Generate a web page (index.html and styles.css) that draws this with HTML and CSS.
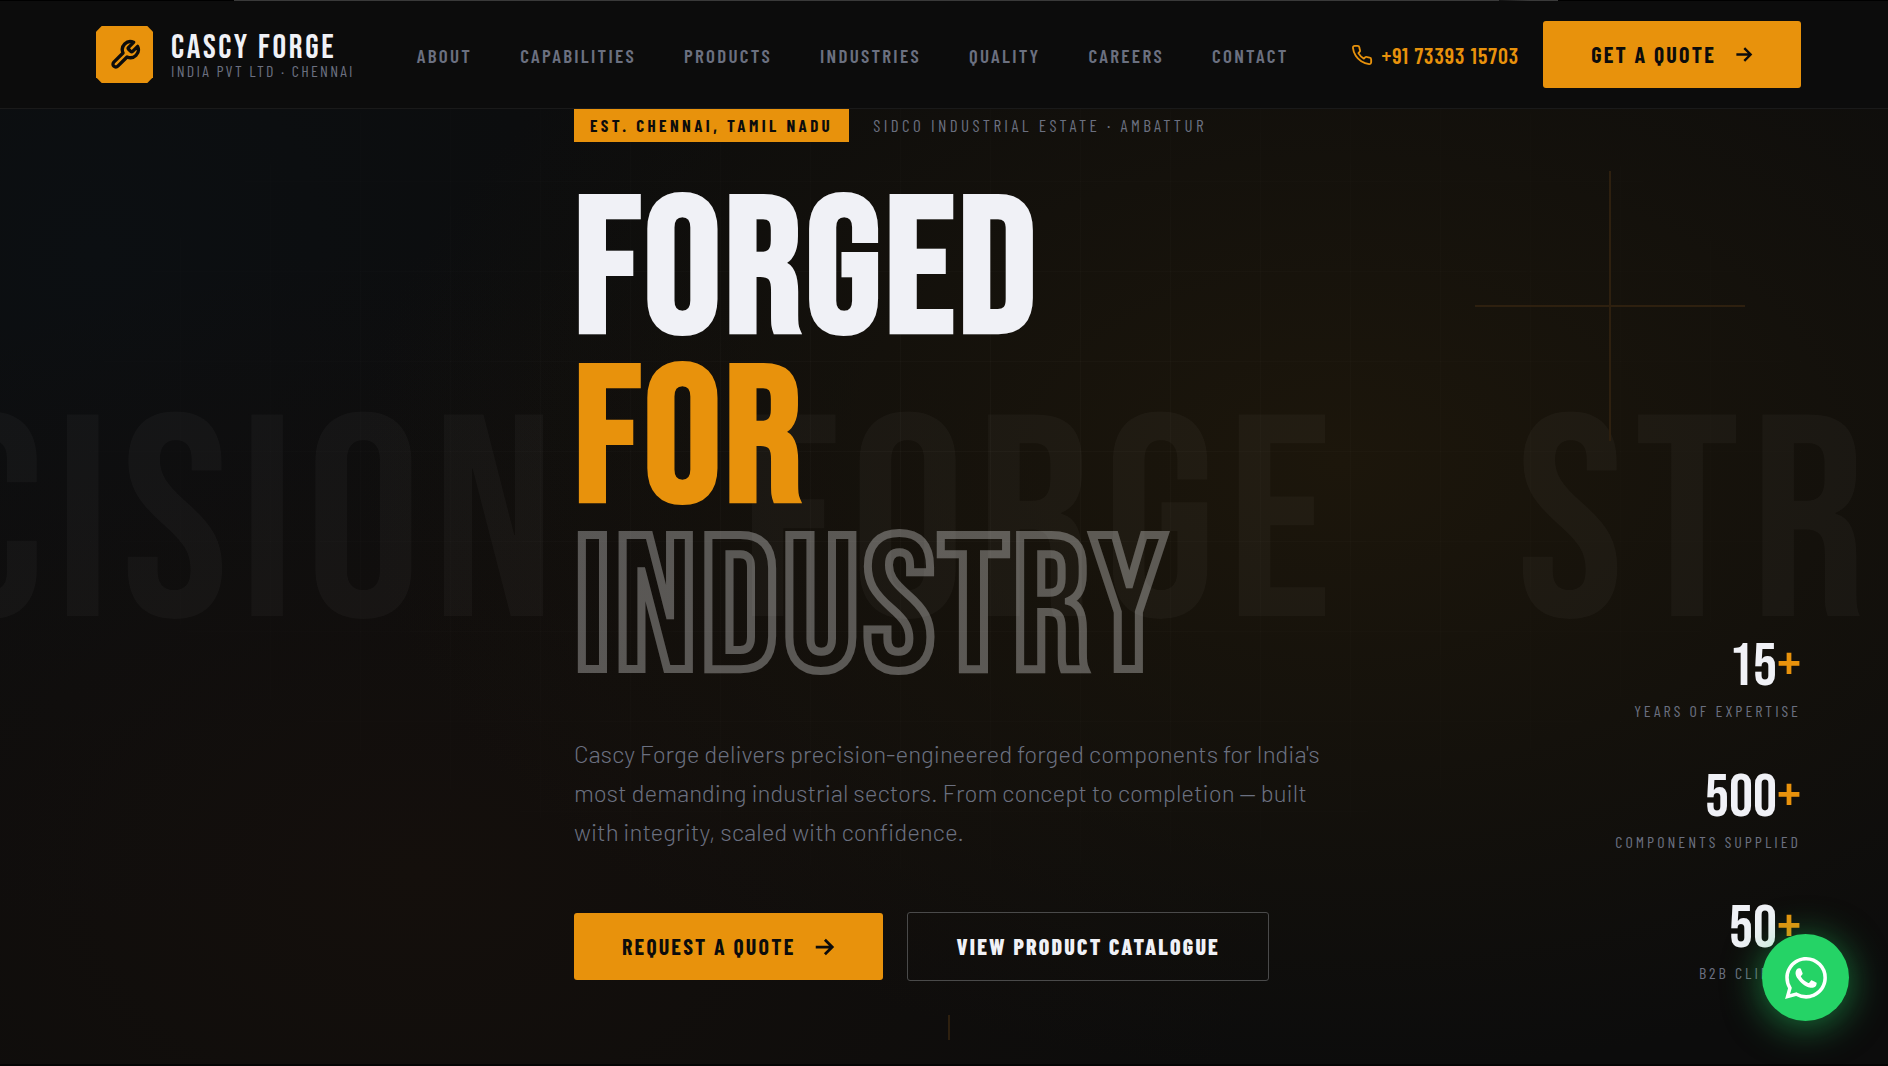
FILE: index.html
```html
<!DOCTYPE html>
<html lang="en">
<head>
<meta charset="UTF-8">
<meta name="viewport" content="width=device-width, initial-scale=1">
<title>Cascy Forge India Pvt Ltd</title>
<link rel="stylesheet" href="styles.css">
</head>
<body>
<div class="top-strip"></div>

<header class="header">
  <a class="logo" href="#">
    <span class="logo-icon">
      <svg viewBox="0 0 24 24" fill="none" stroke="currentColor" stroke-width="2.5" stroke-linecap="round" stroke-linejoin="round"><path d="M14.7 6.3a1 1 0 0 0 0 1.4l1.6 1.6a1 1 0 0 0 1.4 0l3.77-3.77a6 6 0 0 1-7.94 7.94l-6.91 6.91a2.12 2.12 0 0 1-3-3l6.91-6.91a6 6 0 0 1 7.94-7.94l-3.76 3.76z"/></svg>
    </span>
    <span class="logo-text">
      <span class="logo-name">CASCY FORGE</span>
      <span class="logo-sub">INDIA PVT LTD · CHENNAI</span>
    </span>
  </a>
  <nav class="nav">
    <a href="#about">ABOUT</a>
    <a href="#capabilities">CAPABILITIES</a>
    <a href="#products">PRODUCTS</a>
    <a href="#industries">INDUSTRIES</a>
    <a href="#quality">QUALITY</a>
    <a href="#careers">CAREERS</a>
    <a href="#contact">CONTACT</a>
  </nav>
  <div class="header-right">
    <a class="phone" href="tel:+917339315703">
      <svg viewBox="0 0 24 24" fill="none" stroke="currentColor" stroke-width="2" stroke-linecap="round" stroke-linejoin="round"><path d="M22 16.92v3a2 2 0 0 1-2.18 2 19.79 19.79 0 0 1-8.63-3.07 19.5 19.5 0 0 1-6-6 19.79 19.79 0 0 1-3.07-8.67A2 2 0 0 1 4.11 2h3a2 2 0 0 1 2 1.72c.127.96.361 1.903.7 2.81a2 2 0 0 1-.45 2.11L8.09 9.91a16 16 0 0 0 6 6l1.27-1.27a2 2 0 0 1 2.11-.45c.907.339 1.85.573 2.81.7A2 2 0 0 1 22 16.92z"/></svg>
      +91 73393 15703
    </a>
    <a class="btn btn-primary" href="#quote">GET A QUOTE
      <svg viewBox="0 0 24 24" fill="none" stroke="currentColor" stroke-width="3"><path d="M3 12h17M13 4l8 8-8 8"/></svg>
    </a>
  </div>
</header>

<main class="hero">
  <div class="hero-grid"></div>
  <div class="hero-marquee" aria-hidden="true">
    <span>PRECISION</span><span>FORGE</span><span>STRENGTH</span>
  </div>
  <div class="hero-cross"></div>

  <section class="hero-content">
    <div class="eyebrow">
      <span class="badge">EST. CHENNAI, TAMIL NADU</span>
      <span class="place">SIDCO INDUSTRIAL ESTATE · AMBATTUR</span>
    </div>
    <h1 class="title">
      <span>FORGED</span>
      <span class="title-accent">FOR</span>
      <span class="title-outline">INDUSTRY</span>
    </h1>
    <p class="lead">Cascy Forge delivers precision-engineered forged components for India's most demanding industrial sectors. From concept to completion — built with integrity, scaled with confidence.</p>
    <div class="actions">
      <a class="btn btn-primary" href="#quote">REQUEST A QUOTE
        <svg viewBox="0 0 24 24" fill="none" stroke="currentColor" stroke-width="3"><path d="M3 12h17M13 4l8 8-8 8"/></svg>
      </a>
      <a class="btn btn-outline" href="#catalogue">VIEW PRODUCT CATALOGUE</a>
    </div>
  </section>

  <aside class="stats">
    <div class="stat">
      <div class="stat-num">15<span>+</span></div>
      <div class="stat-label">YEARS OF EXPERTISE</div>
    </div>
    <div class="stat">
      <div class="stat-num">500<span>+</span></div>
      <div class="stat-label">COMPONENTS SUPPLIED</div>
    </div>
    <div class="stat">
      <div class="stat-num">50<span>+</span></div>
      <div class="stat-label">B2B CLIENTS</div>
    </div>
  </aside>
  <div class="scroll-line"></div>
</main>

<a class="whatsapp" href="#whatsapp" aria-label="WhatsApp">
  <svg viewBox="0 0 24 24" fill="currentColor"><path d="M17.472 14.382c-.297-.149-1.758-.867-2.03-.967-.273-.099-.471-.148-.67.15-.197.297-.767.966-.94 1.164-.173.199-.347.223-.644.075-.297-.15-1.255-.463-2.39-1.475-.883-.788-1.48-1.761-1.653-2.059-.173-.297-.018-.458.13-.606.134-.133.298-.347.446-.52.149-.174.198-.298.298-.497.099-.198.05-.371-.025-.52-.075-.149-.669-1.612-.916-2.207-.242-.579-.487-.5-.669-.51-.173-.008-.371-.01-.57-.01-.198 0-.52.074-.792.372-.272.297-1.04 1.016-1.04 2.479 0 1.462 1.065 2.875 1.213 3.074.149.198 2.096 3.2 5.077 4.487.709.306 1.262.489 1.694.625.712.227 1.36.195 1.871.118.571-.085 1.758-.719 2.006-1.413.248-.694.248-1.289.173-1.413-.074-.124-.272-.198-.57-.347m-5.421 7.403h-.004a9.87 9.87 0 0 1-5.031-1.378l-.361-.214-3.741.982.998-3.648-.235-.374a9.86 9.86 0 0 1-1.51-5.26c.001-5.45 4.436-9.884 9.888-9.884 2.64 0 5.122 1.03 6.988 2.898a9.825 9.825 0 0 1 2.893 6.994c-.003 5.45-4.437 9.884-9.885 9.884m8.413-18.297A11.815 11.815 0 0 0 12.05 0C5.495 0 .16 5.335.157 11.892c0 2.096.547 4.142 1.588 5.945L.057 24l6.305-1.654a11.882 11.882 0 0 0 5.683 1.448h.005c6.554 0 11.89-5.335 11.893-11.893a11.821 11.821 0 0 0-3.48-8.413z"/></svg>
</a>
</body>
</html>
```
FILE: styles.css
```css
* {
  box-sizing: border-box;
  margin: 0;
  padding: 0;
}
:root {
  --amber: #e8920c;
  --ink: #0c0c0c;
  --light: #f0f1f6;
  --muted: #6b7080;
}
body {
  background: #050505;
  color: var(--light);
  font-family: Barlow, Roboto, sans-serif;
  overflow: hidden;
}
a {
  color: inherit;
  text-decoration: none;
}
svg {
  flex: none;
}
.top-strip {
  height: 1px;
  background: linear-gradient(90deg, #000 12.4%, #3a3a3a 12.4%, #3a3a3a 79.4%, #111 79.4%, #3a3a3a 81%, #3a3a3a 82.5%, #000 82.5%);
}

/* header */
.header {
  display: flex;
  align-items: center;
  justify-content: space-between;
  height: 108px;
  padding: 0 87px 0 96px;
  background: var(--ink);
  border-bottom: 1px solid #1a1a1a;
}
.logo {
  display: flex;
  align-items: center;
  gap: 18px;
}
.logo-icon {
  display: flex;
  align-items: center;
  justify-content: center;
  width: 57px;
  height: 57px;
  background: var(--amber);
  color: var(--ink);
  clip-path: polygon(10% 0, 90% 0, 100% 10%, 100% 90%, 90% 100%, 10% 100%, 0 90%, 0 10%);
}
.logo-icon svg {
  width: 32px;
  height: 32px;
}
.logo-text {
  display: flex;
  flex-direction: column;
}
.logo-name {
  font-family: "Bebas Neue", "Barlow Condensed", sans-serif;
  font-size: 34px;
  line-height: 32px;
  letter-spacing: 0.08em;
}
.logo-sub {
  font-family: "Barlow Condensed", "Roboto Condensed", sans-serif;
  font-size: 16px;
  line-height: 14px;
  letter-spacing: 0.14em;
  color: var(--muted);
}
.nav {
  display: flex;
  gap: 48px;
  padding-top: 2px;
  font-family: "Barlow Condensed", "Roboto Condensed", sans-serif;
  font-size: 19px;
  font-weight: 600;
  letter-spacing: 0.12em;
  color: var(--muted);
}
.header-right {
  display: flex;
  align-items: center;
  gap: 24px;
}
.phone {
  display: flex;
  align-items: center;
  gap: 9px;
  font-family: "Barlow Condensed", "Roboto Condensed", sans-serif;
  font-size: 22px;
  font-weight: 600;
  letter-spacing: 1px;
  color: var(--amber);
}
.phone svg {
  width: 22px;
  height: 22px;
}
.btn {
  display: inline-flex;
  align-items: center;
  gap: 18px;
  padding: 20px 48px;
  border-radius: 3px;
  font-family: "Barlow Condensed", "Roboto Condensed", sans-serif;
  font-size: 22px;
  line-height: 27px;
  font-weight: 700;
  letter-spacing: 0.1em;
}
.btn svg {
  width: 19px;
  height: 19px;
}
.btn-primary {
  background: var(--amber);
  color: var(--ink);
}
.btn-outline {
  border: 1px solid #4a4a4a;
  font-weight: 800;
}

/* hero */
.hero {
  position: relative;
  display: grid;
  grid-template-columns: 478px minmax(0, 1fr) auto;
  min-height: calc(100vh - 111px);
  padding: 0 87px 81px 96px;
  overflow: hidden;
  background:
    radial-gradient(ellipse 52% 64% at 71% 37%, #1c160b, transparent),
    radial-gradient(ellipse 45% 65% at 22% 80%, #140f0c, transparent),
    radial-gradient(ellipse 35% 70% at 5% 15%, #0c0f12, transparent),
    var(--ink);
}
.hero-grid {
  position: absolute;
  inset: -18px 0 0;
  background:
    linear-gradient(rgba(255, 255, 255, 0.025) 1px, transparent 1px),
    linear-gradient(90deg, rgba(255, 255, 255, 0.025) 1px, transparent 1px);
  background-size: 90px 90px;
  mask-image: radial-gradient(ellipse 60% 60% at 50% 35%, #000, transparent);
}
.hero-marquee {
  position: absolute;
  top: 248px;
  left: -431px;
  display: flex;
  gap: 174px;
  font-family: "Bebas Neue", "Barlow Condensed", sans-serif;
  font-size: 288px;
  line-height: 346px;
  letter-spacing: 11px;
  white-space: nowrap;
  color: rgba(255, 255, 255, 0.03);
}
.hero-cross {
  position: absolute;
  top: 62px;
  right: 143px;
  width: 270px;
  height: 270px;
  background:
    linear-gradient(#2e200f, #2e200f) center / 100% 2px no-repeat,
    linear-gradient(#2e200f, #2e200f) center / 2px 100% no-repeat;
}
.hero-content {
  position: relative;
  grid-column: 2;
}
.eyebrow {
  display: flex;
  align-items: center;
  gap: 24px;
  font-family: "Barlow Condensed", "Roboto Condensed", sans-serif;
  font-size: 17px;
  line-height: 21px;
  letter-spacing: 0.2em;
}
.badge {
  padding: 6px 16px;
  background: var(--amber);
  color: var(--ink);
  font-weight: 700;
}
.place {
  color: var(--muted);
}
.title {
  margin-top: 47px;
  font-family: "Bebas Neue", "Barlow Condensed", sans-serif;
  font-size: 192px;
  line-height: 169px;
  letter-spacing: 0.02em;
}
.title span {
  display: block;
}
.title-accent {
  color: var(--amber);
}
.title-outline {
  color: transparent;
  -webkit-text-stroke: 2px rgba(255, 255, 255, 0.3);
}
.lead {
  max-width: 768px;
  margin-top: 38px;
  font-size: 24px;
  line-height: 39px;
  font-weight: 300;
  color: var(--muted);
}
.actions {
  display: flex;
  align-items: center;
  gap: 24px;
  margin-top: 61px;
}
.actions .btn svg {
  width: 22px;
  height: 22px;
}
.stats {
  position: relative;
  display: flex;
  flex-direction: column;
  justify-content: flex-end;
  gap: 47px;
  text-align: right;
}
.stat-num {
  font-family: "Bebas Neue", "Barlow Condensed", sans-serif;
  font-size: 60px;
  line-height: 60px;
}
.stat-num span {
  color: var(--amber);
}
.stat-label {
  margin-top: 4px;
  font-family: "Barlow Condensed", "Roboto Condensed", sans-serif;
  font-size: 16px;
  line-height: 20px;
  letter-spacing: 3px;
  color: var(--muted);
}
.scroll-line {
  position: absolute;
  bottom: 24px;
  left: 50%;
  width: 2px;
  height: 25px;
  margin-left: 4px;
  background: #2e200f;
}
.whatsapp {
  position: fixed;
  right: 39px;
  bottom: 45px;
  display: flex;
  align-items: center;
  justify-content: center;
  width: 87px;
  height: 87px;
  border-radius: 50%;
  background: #25d366;
  color: #fff;
  box-shadow: 0 5px 38px rgba(37, 211, 102, 0.55);
}
.whatsapp svg {
  width: 42px;
  height: 42px;
}
```
